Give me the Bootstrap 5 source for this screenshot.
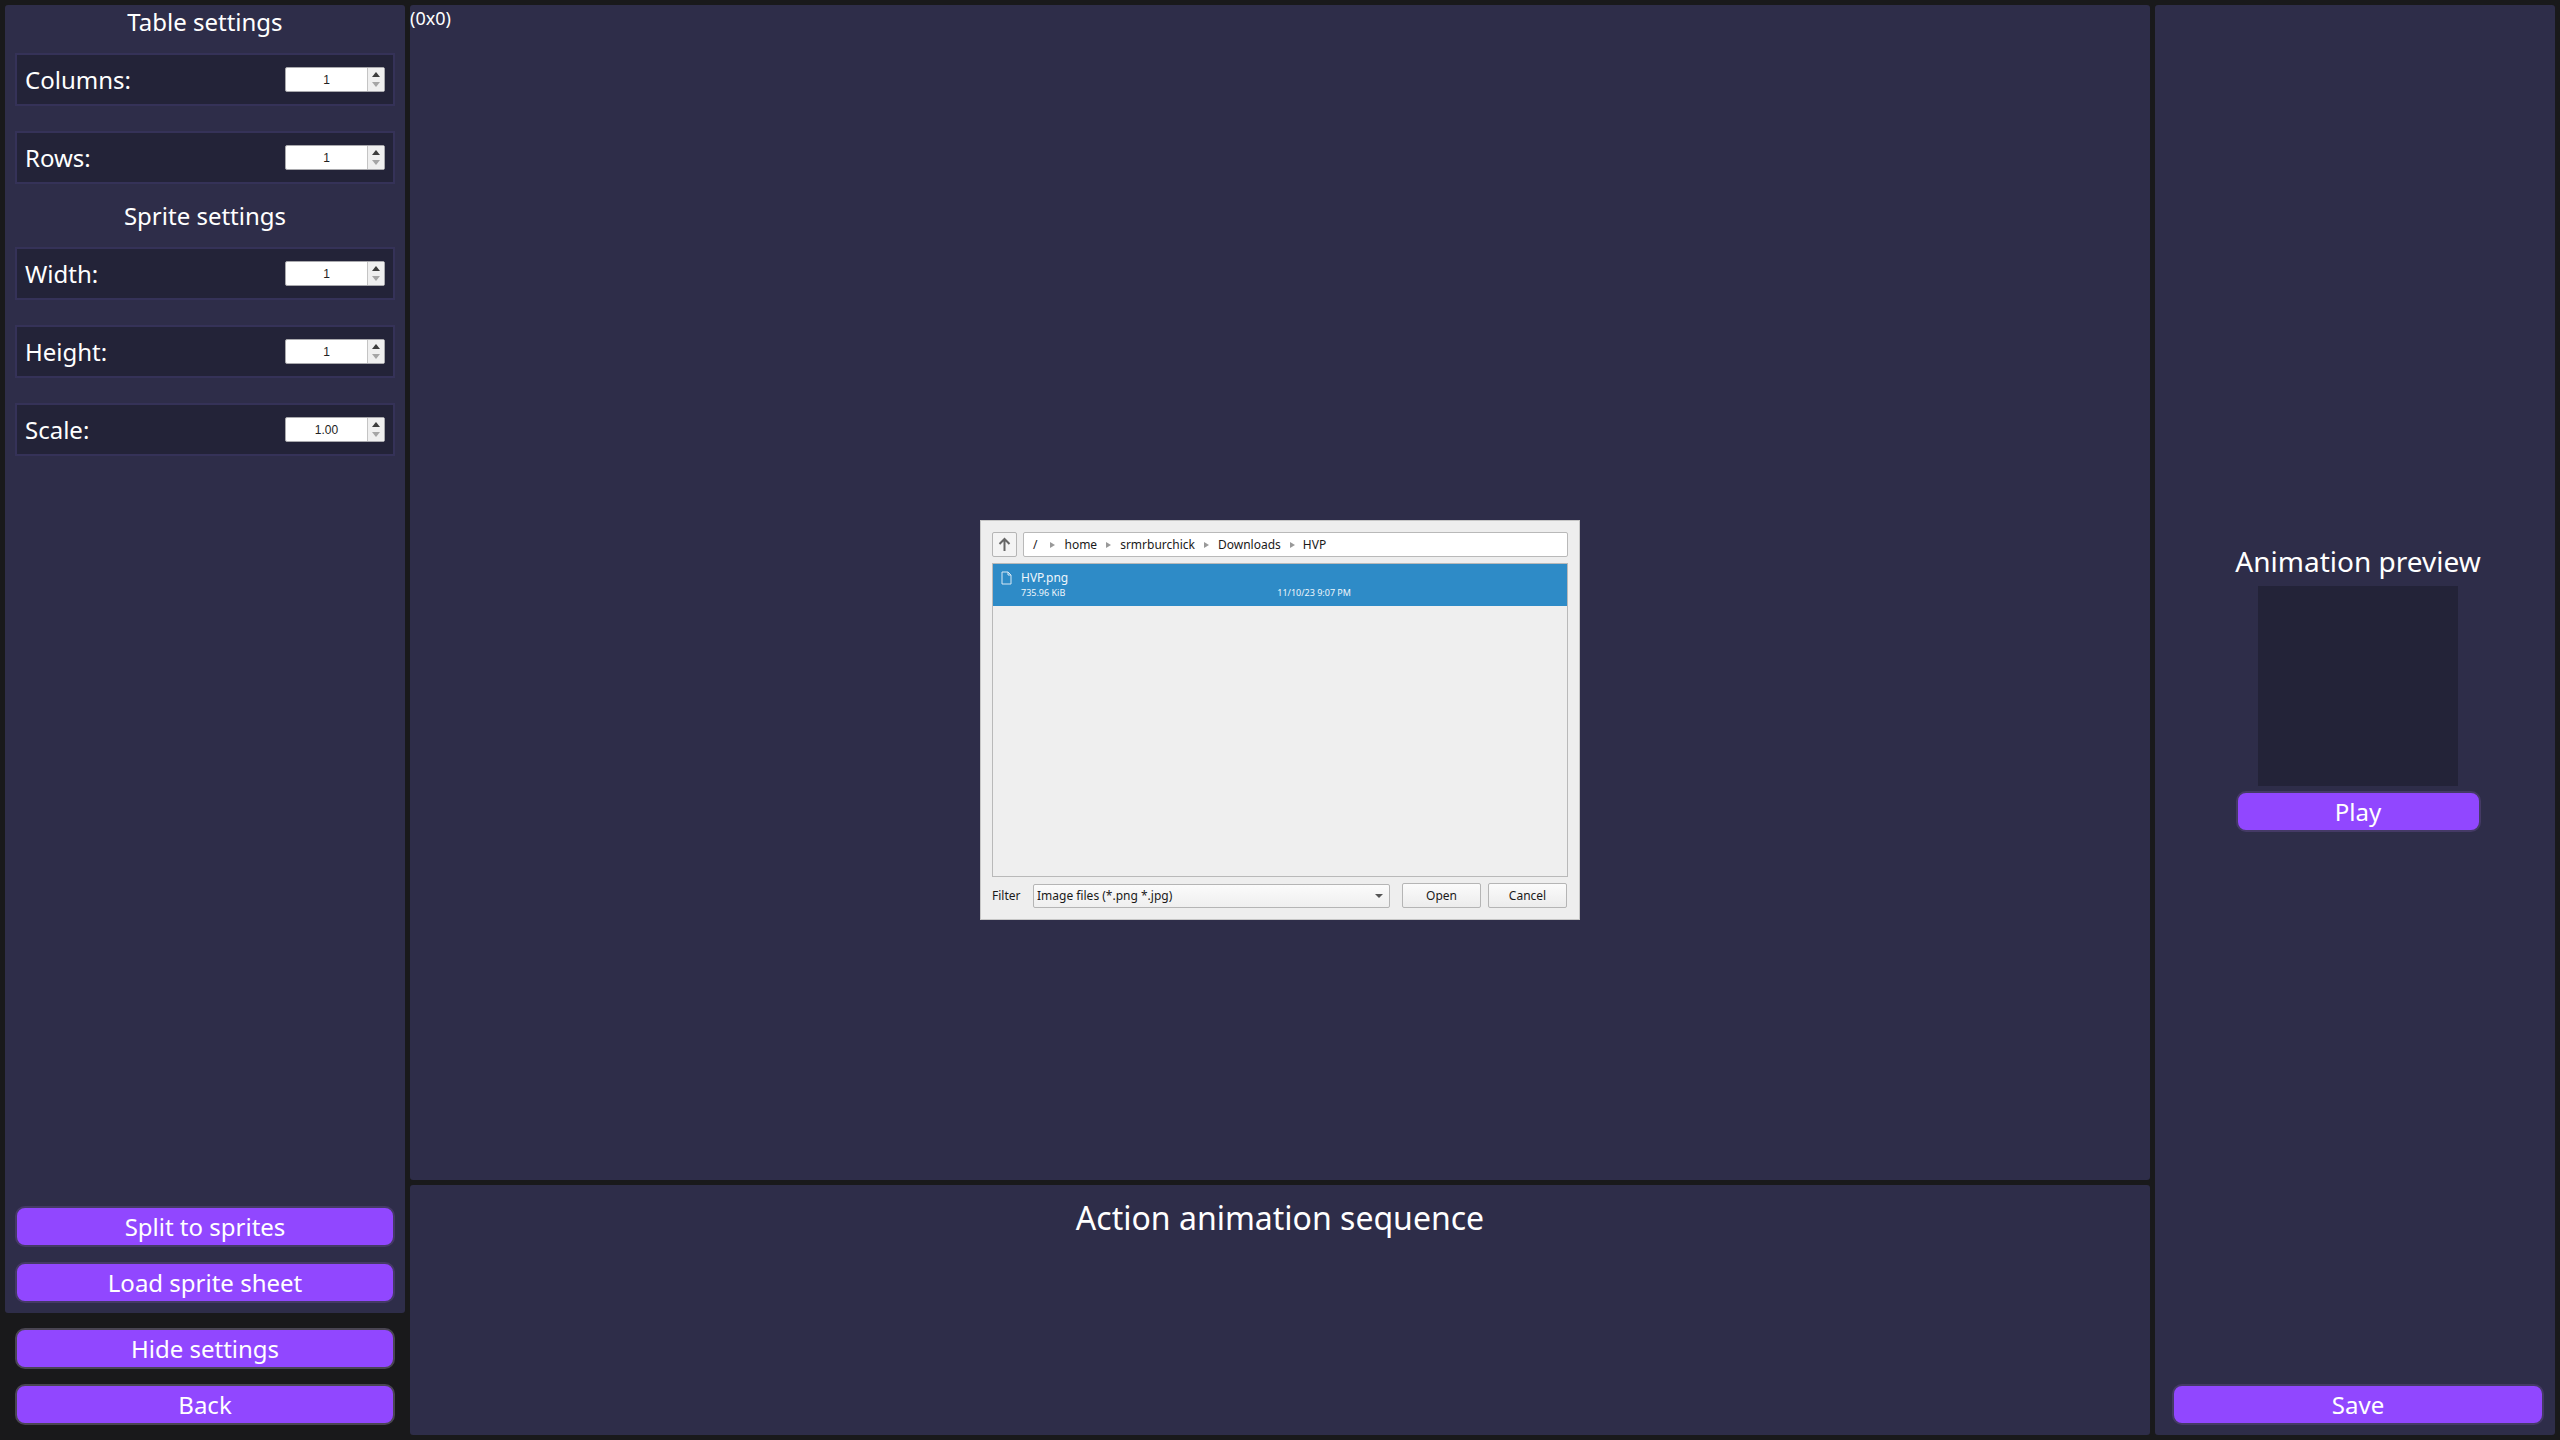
<!DOCTYPE html>
<html lang="en">
<head>
<meta charset="utf-8">
<title>Sprite editor</title>
<link href="https://cdn.jsdelivr.net/npm/bootstrap@5.3.0/dist/css/bootstrap.min.css" rel="stylesheet">
<style>
html, body { height: 100%; }
body { background: #19191b; color: #fff; font-family: "Noto Sans", sans-serif; overflow: hidden; }
.app-shell { width: 2560px; height: 1440px; padding: 5px; gap: 5px; }
.pane { background: #2e2d49; border-radius: 3px; }
.left-col { width: 400px; }
.left-pane { height: 1308px; padding: 0 10px 10px; }
.left-foot { padding: 15px 10px 0; gap: 15px; }
.center-col { width: 1740px; gap: 5px; }
.canvas-pane { height: 1175px; }
.seq-pane { height: 250px; }
.right-pane { width: 400px; padding: 0 11px 10px 17px; }
.pane-title { font-size: 24px; line-height: 34px; text-align: center; }
.t-first { margin-bottom: 14px; }
.t-second { margin-top: 15px; margin-bottom: 14px; }
.field-row { height: 53px; background: #232338; border: 2px solid #353258; padding: 0 8px; font-size: 24px; margin-bottom: 25px; }
.spin-box { width: 100px; height: 25px; background: #fff; border: 1px solid #a9a9ad; border-radius: 2px; color: #222; font-family: "Liberation Sans", sans-serif; font-size: 12px; }
.spin-val { flex: 1; text-align: center; line-height: 24px; }
.spin-arrows { width: 17px; border-left: 1px solid #c4c4c4; background: #efefef; gap: 5px; }
.arrow-up { width: 0; height: 0; border: 4px solid transparent; border-top: 0; border-bottom: 5px solid #3c3c3c; }
.arrow-down { width: 0; height: 0; border: 4px solid transparent; border-bottom: 0; border-top: 5px solid #a5a5a5; }
.btn-violet { background: #9147ff; color: #fff; border: 2px solid #453a66; border-radius: 10px; height: 41px; padding: 0; font-size: 24px; line-height: 36px; width: 100%; }
.btn-violet:hover { background: #9147ff; color: #fff; border-color: #453a66; }
.foot-btn { border-color: #4a4553; }
.btn-stack { gap: 15px; }
.size-label { font-size: 18px; line-height: 26px; }
.dialog-shot { width: 600px; height: 400px; margin: 515px auto 0; background: #eeeeee; border: 1px solid #c6c6c6; color: #1a1a1a; padding: 11px 11px 0; font-size: 12px; }
.up-btn { width: 25px; height: 25px; border: 1px solid #b5b5b5; border-radius: 2px; background: #f4f4f4; }
.path-bar { height: 25px; margin-left: 6px; flex: 1; background: #fff; border: 1px solid #b9b9b9; border-radius: 2px; padding-left: 9px; gap: 9px; }
.crumb-root { margin-right: 4px; }
.crumb-last { margin-left: -1px; }
.crumb-arrow { width: 0; height: 0; border: 3.5px solid transparent; border-right: 0; border-left: 5px solid #999; }
.file-list { height: 314px; margin-top: 6px; border: 1px solid #b9b9b9; background: #efefef; }
.file-sel { height: 42px; background: #2e8bc7; color: #eef6fb; padding: 6px 0 0 8px; }
.file-name { font-size: 12px; line-height: 16px; margin-left: 9px; }
.file-meta { font-size: 9px; line-height: 12px; margin-left: 20px; margin-top: 1px; width: 100%; }
.file-date { margin-left: 212px; }
.filter-row { margin-top: 6px; height: 25px; }
.filter-label { width: 41px; }
.combo-box { width: 357px; height: 24px; background: linear-gradient(#fbfbfb, #efefef); border: 1px solid #b5b5b5; border-radius: 2px; padding: 0 5px 0 3px; }
.combo-caret { width: 0; height: 0; border: 4px solid transparent; border-bottom: 0; border-top: 4px solid #555; margin-right: 1px; }
.dlg-btn { width: 79px; height: 25px; background: linear-gradient(#fbfbfb, #ececec); border: 1px solid #b5b5b5; border-radius: 2px; }
.dlg-open { margin-left: 12px; margin-right: 7px; }
.seq-title { font-size: 32px; line-height: 44px; text-align: center; padding-top: 11px; }
.preview-title { font-size: 28px; line-height: 38px; text-align: center; margin-top: 537px; }
.preview-box { width: 200px; height: 200px; background: #232338; margin: 6px auto 5px; }
.play-btn { width: 245px; margin: 0 auto; }
</style>
</head>
<body>
<div class="app-shell d-flex">
  <div class="left-col d-flex flex-column">
    <div class="pane left-pane d-flex flex-column">
      <div class="pane-title t-first">Table settings</div>
      <div class="field-row d-flex align-items-center justify-content-between"><span>Columns:</span><div class="spin-box d-flex"><div class="spin-val">1</div><div class="spin-arrows d-flex flex-column align-items-center justify-content-center"><i class="arrow-up"></i><i class="arrow-down"></i></div></div></div>
      <div class="field-row d-flex align-items-center justify-content-between mb-0"><span>Rows:</span><div class="spin-box d-flex"><div class="spin-val">1</div><div class="spin-arrows d-flex flex-column align-items-center justify-content-center"><i class="arrow-up"></i><i class="arrow-down"></i></div></div></div>
      <div class="pane-title t-second">Sprite settings</div>
      <div class="field-row d-flex align-items-center justify-content-between"><span>Width:</span><div class="spin-box d-flex"><div class="spin-val">1</div><div class="spin-arrows d-flex flex-column align-items-center justify-content-center"><i class="arrow-up"></i><i class="arrow-down"></i></div></div></div>
      <div class="field-row d-flex align-items-center justify-content-between"><span>Height:</span><div class="spin-box d-flex"><div class="spin-val">1</div><div class="spin-arrows d-flex flex-column align-items-center justify-content-center"><i class="arrow-up"></i><i class="arrow-down"></i></div></div></div>
      <div class="field-row d-flex align-items-center justify-content-between"><span>Scale:</span><div class="spin-box d-flex"><div class="spin-val">1.00</div><div class="spin-arrows d-flex flex-column align-items-center justify-content-center"><i class="arrow-up"></i><i class="arrow-down"></i></div></div></div>
      <div class="mt-auto d-flex flex-column btn-stack">
        <button class="btn btn-violet" type="button">Split to sprites</button>
        <button class="btn btn-violet" type="button">Load sprite sheet</button>
      </div>
    </div>
    <div class="left-foot d-flex flex-column">
      <button class="btn btn-violet foot-btn" type="button">Hide settings</button>
      <button class="btn btn-violet foot-btn" type="button">Back</button>
    </div>
  </div>
  <div class="center-col d-flex flex-column">
    <div class="pane canvas-pane position-relative">
      <div class="size-label position-absolute top-0 start-0">(0x0)</div>
      <div class="dialog-shot">
        <div class="d-flex">
          <div class="up-btn d-flex align-items-center justify-content-center">
            <svg width="15" height="15" viewBox="0 0 15 15"><path d="M7.5 2 L7.5 14 M2.5 7 L7.5 2 L12.5 7" fill="none" stroke="#666" stroke-width="2"/></svg>
          </div>
          <div class="path-bar d-flex align-items-center">
            <span class="crumb-root">/</span><i class="crumb-arrow"></i><span>home</span><i class="crumb-arrow"></i><span>srmrburchick</span><i class="crumb-arrow"></i><span>Downloads</span><i class="crumb-arrow"></i><span class="crumb-last">HVP</span>
          </div>
        </div>
        <div class="file-list">
          <div class="file-sel">
            <div class="d-flex align-items-center">
              <svg width="11" height="14" viewBox="0 0 11 14"><path d="M1 1 H7 L10 4 V13 H1 Z M7 1 V4 H10" fill="none" stroke="#d7e8f4" stroke-width="1"/></svg>
              <span class="file-name">HVP.png</span>
            </div>
            <div class="file-meta d-flex"><span>735.96 KiB</span><span class="file-date">11/10/23 9:07 PM</span></div>
          </div>
        </div>
        <div class="filter-row d-flex align-items-center">
          <div class="filter-label">Filter</div>
          <div class="combo-box d-flex align-items-center justify-content-between"><span>Image files (*.png *.jpg)</span><i class="combo-caret"></i></div>
          <div class="dlg-btn dlg-open d-flex align-items-center justify-content-center">Open</div>
          <div class="dlg-btn d-flex align-items-center justify-content-center">Cancel</div>
        </div>
      </div>
    </div>
    <div class="pane seq-pane">
      <div class="seq-title">Action animation sequence</div>
    </div>
  </div>
  <div class="pane right-pane d-flex flex-column">
    <div class="preview-title">Animation preview</div>
    <div class="preview-box"></div>
    <button class="btn btn-violet play-btn" type="button">Play</button>
    <button class="btn btn-violet mt-auto" type="button">Save</button>
  </div>
</div>
<script src="https://cdn.jsdelivr.net/npm/bootstrap@5.3.0/dist/js/bootstrap.bundle.min.js"></script>
</body>
</html>
